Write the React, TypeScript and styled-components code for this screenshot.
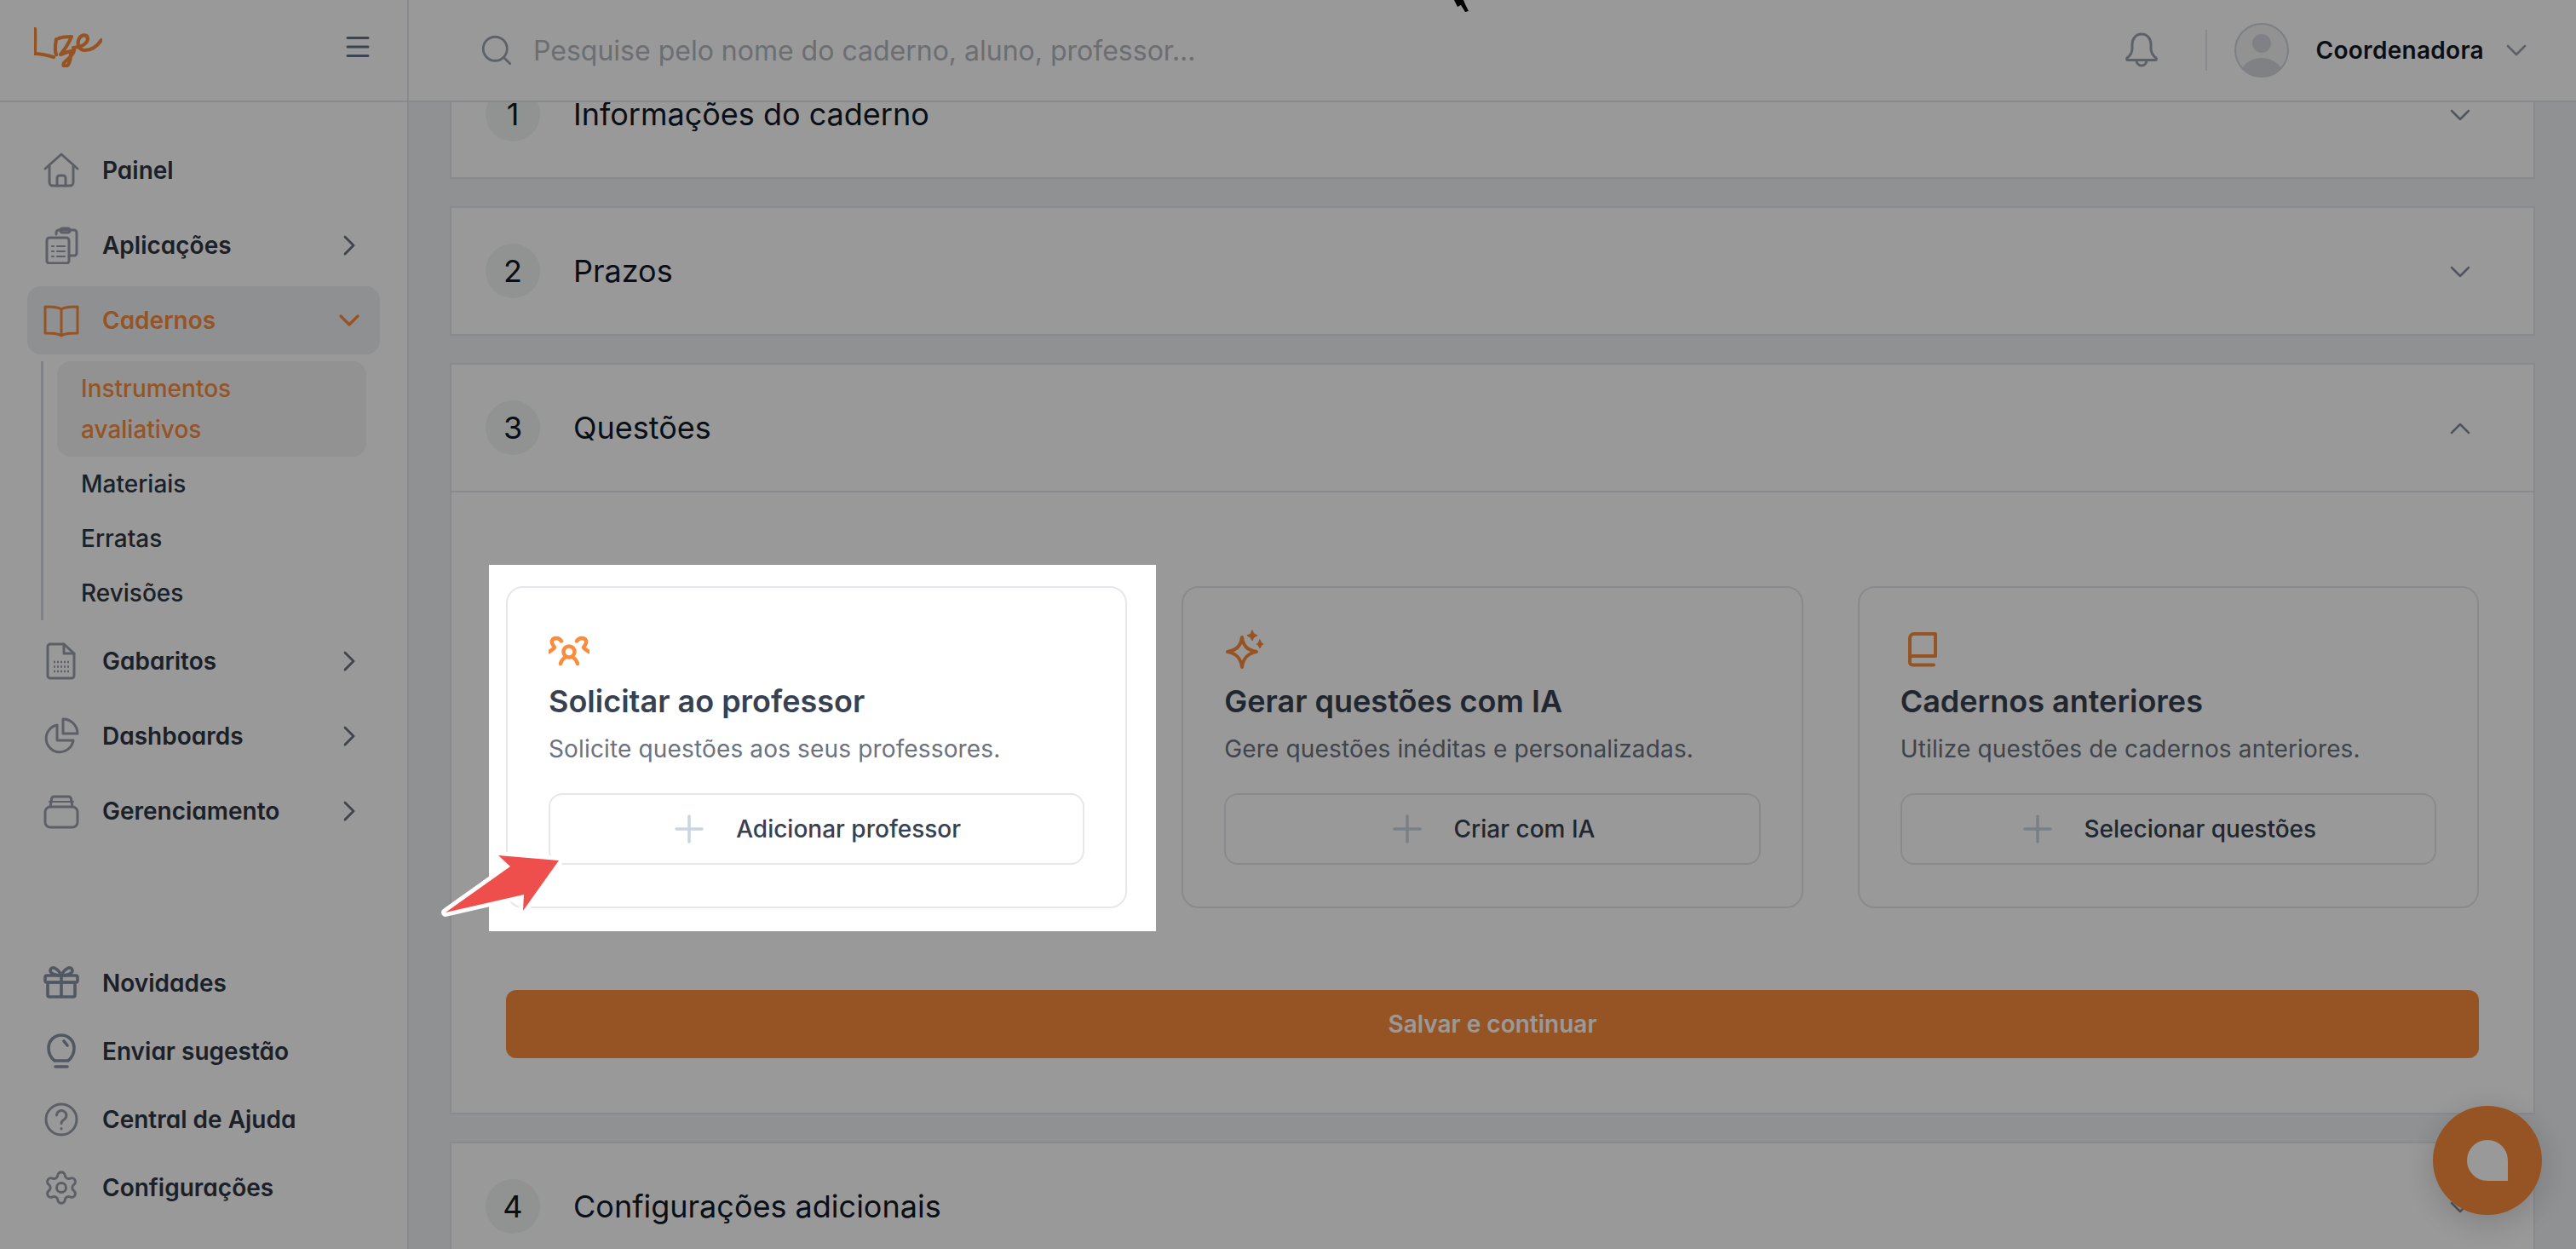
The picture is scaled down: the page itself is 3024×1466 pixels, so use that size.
import React from "react";
import styled, { createGlobalStyle } from "styled-components";
import { ChevronDown, ChevronRight, ChevronUp, Menu, Search, Settings } from "lucide-react";

const Global = createGlobalStyle`
  html, body { margin: 0; padding: 0; height: 100%; overflow: hidden; background: #f0f2f5; }
  * { box-sizing: border-box; }
  body { font-family: Inter, "Liberation Sans", sans-serif; color: #111827; }
`;

const ORANGE = "#fa8c3c";
const BORDER = "#e5e7eb";

const Shell = styled.div`
  display: flex;
  width: 100%;
  height: 100vh;
`;
const Sidebar = styled.aside`
  width: 480px;
  flex: none;
  display: flex;
  flex-direction: column;
  background: #fff;
  border-right: 2px solid ${BORDER};
`;
const Brand = styled.div`
  height: 120px;
  flex: none;
  display: flex;
  align-items: center;
  justify-content: space-between;
  padding: 0 40px 8px 40px;
  border-bottom: 2px solid ${BORDER};
  color: #64748b;
`;
const NavArea = styled.nav`
  flex: 1;
  display: flex;
  flex-direction: column;
  justify-content: space-between;
  padding: 40px 32px 32px;
`;
const NavGroup = styled.div`
  display: flex;
  flex-direction: column;
  gap: 8px;
`;
const FooterGroup = styled.div`
  display: flex;
  flex-direction: column;
`;
const NavRow = styled.div<{ $active?: boolean }>`
  height: 80px;
  display: flex;
  align-items: center;
  gap: 26px;
  padding: 0 16px 0 18px;
  border-radius: 16px;
  background: ${(p) => (p.$active ? "#eff1f4" : "transparent")};
  color: ${(p) => (p.$active ? ORANGE : "#2f3644")};
`;
const NavIcon = styled.svg<{ $dark?: boolean; $active?: boolean }>`
  width: 44px;
  height: 44px;
  flex: none;
  fill: none;
  stroke: ${(p) => (p.$active ? ORANGE : p.$dark ? "#8893a7" : "#9aa0ab")};
  stroke-width: ${(p) => (p.$dark ? 3.6 : 3)};
  stroke-linecap: round;
  stroke-linejoin: round;
`;
const GearIcon = styled(Settings)`
  width: 44px;
  height: 44px;
  flex: none;
  color: #9aa0ab;
`;
const NavLabel = styled.span`
  flex: 1;
  font-size: 28px;
  font-weight: 600;
  font-feature-settings: "cv11";
  white-space: nowrap;
`;
const NavChevron = styled.span<{ $active?: boolean }>`
  display: flex;
  color: ${(p) => (p.$active ? ORANGE : "#6b7280")};
`;
const SubList = styled.div`
  margin: 0 16px;
  padding-left: 16px;
  border-left: 3px solid #d5d8de;
`;
const SubItem = styled.div<{ $active?: boolean }>`
  padding: 8px 28px;
  font-size: 28px;
  line-height: 48px;
  font-weight: 500;
  border-radius: 16px;
  background: ${(p) => (p.$active ? "#f3f4f6" : "transparent")};
  color: ${(p) => (p.$active ? ORANGE : "#2f3644")};
`;
const Main = styled.main`
  flex: 1;
  min-width: 0;
  display: flex;
  flex-direction: column;
`;
const TopBar = styled.header`
  height: 120px;
  flex: none;
  display: flex;
  align-items: center;
  background: #fff;
  border-bottom: 2px solid ${BORDER};
  padding: 0 50px 0 82px;
`;
const SearchIcon = styled.span`
  display: flex;
  color: #9ca3af;
`;
const SearchText = styled.span`
  margin-left: 22px;
  flex: 1;
  font-size: 32px;
  color: #b4b7bf;
`;
const BellIcon = styled.svg`
  width: 44px;
  height: 44px;
  fill: none;
  stroke: #9ca3af;
  stroke-width: 3;
  stroke-linejoin: round;
  stroke-linecap: round;
`;
const Divider = styled.div`
  width: 2px;
  height: 48px;
  background: ${BORDER};
  margin: 0 32px 0 53px;
`;
const Avatar = styled.svg`
  width: 64px;
  height: 64px;
  flex: none;
`;
const UserName = styled.span`
  margin-left: 31px;
  font-size: 28px;
  font-weight: 600;
  letter-spacing: 0.3px;
  color: #111827;
`;
const UserChevron = styled.span`
  display: flex;
  margin-left: 18px;
  color: #9ca3af;
`;
const Scroller = styled.div`
  flex: 1;
  min-height: 0;
  overflow: hidden;
  padding: 0 48px;
`;
const Stack = styled.div`
  display: flex;
  flex-direction: column;
  gap: 32px;
  margin-top: -62px;
`;
const Panel = styled.section`
  background: #fff;
  border: 2px solid ${BORDER};
`;
const PanelHead = styled.div`
  height: 148px;
  display: flex;
  align-items: center;
  gap: 39px;
  padding: 0 66px 0 40px;
`;
const Step = styled.span`
  width: 64px;
  height: 64px;
  flex: none;
  display: flex;
  align-items: center;
  justify-content: center;
  border-radius: 50%;
  background: #f1f5f3;
  font-size: 36px;
  line-height: 28px;
  color: #111827;
`;
const PanelTitle = styled.h3`
  flex: 1;
  margin: 0;
  font-size: 36px;
  line-height: 28px;
  font-weight: 400;
  color: #111827;
`;
const PanelChevron = styled.span`
  display: flex;
  margin-top: 2px;
  color: #868d99;
`;
const PanelBody = styled.div`
  border-top: 2px solid ${BORDER};
  padding: 110px 64px 64px;
`;
const CardGrid = styled.div`
  display: grid;
  grid-template-columns: repeat(3, 1fr);
  gap: 64px;
`;
const Spot = styled.div`
  position: relative;
  z-index: 20;
  &::before {
    content: "";
    position: absolute;
    top: -25px;
    right: -34px;
    bottom: -27px;
    left: -20px;
    background: #fff;
  }
`;
const Card = styled.div`
  position: relative;
  display: flex;
  flex-direction: column;
  height: 378px;
  padding: 48px;
  background: #fff;
  border: 2px solid ${BORDER};
  border-radius: 20px;
`;
const CardIcon = styled.svg<{ $weight?: number }>`
  width: 48px;
  height: 48px;
  flex: none;
  fill: none;
  stroke: ${ORANGE};
  stroke-width: ${(p) => p.$weight ?? 4};
  stroke-linecap: round;
  stroke-linejoin: round;
`;
const CardTitle = styled.h4`
  margin: 9px 0 0;
  font-size: 36px;
  line-height: 56px;
  font-weight: 600;
  color: #374151;
  white-space: nowrap;
`;
const CardText = styled.p`
  margin: 8px 0 0;
  font-size: 28px;
  line-height: 40px;
  letter-spacing: 0.15px;
  color: #6b7280;
  white-space: nowrap;
`;
const AddButton = styled.button`
  margin-top: 32px;
  height: 84px;
  flex: none;
  display: flex;
  align-items: center;
  justify-content: center;
  gap: 35px;
  background: #fff;
  border: 2px solid ${BORDER};
  border-radius: 16px;
  font-family: inherit;
  font-size: 28px;
  font-weight: 500;
  color: #374151;
`;
const PlusIcon = styled.svg`
  width: 40px;
  height: 40px;
  flex: none;
  fill: none;
  stroke: #cbd5e1;
  stroke-width: 3.5;
  stroke-linecap: round;
`;
const SaveButton = styled.button`
  display: block;
  width: 100%;
  margin-top: 96px;
  height: 80px;
  border: none;
  border-radius: 12px;
  background: ${ORANGE};
  color: #fff;
  font-family: inherit;
  font-size: 28px;
  font-weight: 600;
`;
const Scrim = styled.div`
  position: fixed;
  inset: 0;
  z-index: 10;
  background: rgba(0, 0, 0, 0.4);
`;
const ChatBubble = styled.div`
  position: fixed;
  left: 2856px;
  top: 1298px;
  z-index: 5;
  width: 128px;
  height: 128px;
  display: flex;
  align-items: center;
  justify-content: center;
  border-radius: 50%;
  background: ${ORANGE};
  box-shadow: 0 8px 40px rgba(0, 0, 0, 0.18);
`;
const ChatGlyph = styled.div`
  width: 48px;
  height: 48px;
  background: #fff;
  border-radius: 50% 50% 0 50%;
`;
const Arrow = styled.svg`
  position: absolute;
  left: -79px;
  top: 312px;
  width: 150px;
  height: 80px;
  overflow: visible;
`;
const Pointer = styled.svg`
  position: fixed;
  left: 1706px;
  top: 0;
  z-index: 30;
  width: 20px;
  height: 14px;
`;

const rows = [
  { label: "Gabaritos", d: <><path d="M9 2H25L37 13V39a3 3 0 0 1-3 3H9a3 3 0 0 1-3-3V5a3 3 0 0 1 3-3Z" /><path d="M25 2V13H37" /><path d="M13 23H31M13 28.5H31M13 34H31" strokeWidth="2.5" strokeDasharray="2 2" strokeLinecap="butt" /></> },
  { label: "Dashboards", d: <><path d="M17 9A16 16 0 1 0 36 27H18a1 1 0 0 1-1-1Z" /><path d="M24 2V19H41A17 17 0 0 0 24 2Z" /></> },
  { label: "Gerenciamento", d: <><rect x="3" y="17" width="38" height="24" rx="6" /><path d="M9 17 10.5 8a3 3 0 0 1 3-3h17a3 3 0 0 1 3 3L35 17" /><path d="M8 11H36" strokeWidth="2.2" /></> },
];

const footer = [
  { label: "Novidades", dark: true, d: <><rect x="3" y="13" width="38" height="8" rx="2" /><rect x="6" y="21" width="32" height="17" rx="2" /><path d="M22 13V38" /><path d="M22 13C18 4 10 1 9 7C9 11 15 13 22 13C29 13 35 11 35 7C34 1 26 4 22 13Z" /></> },
  { label: "Enviar sugestão", dark: true, d: <><path d="M14 33C9 29 7 24 7 18A15 15 0 0 1 37 18C37 24 35 29 30 33Z" /><path d="M15 40H29" /><path d="M25 10 29 15" /></> },
  { label: "Central de Ajuda", d: <><circle cx="22" cy="22" r="18" /><path d="M16.5 17a5.7 5.7 0 1 1 8.8 5c-2 1.200-3.300 2.200-3.300 4.500" /><path d="M22 32.500V33" /></> },
];

const cards = [
  { title: "Gerar questões com IA", text: "Gere questões inéditas e personalizadas.", action: "Criar com IA", icon: <><path d="M21 10C22.500 20 27 25 38 27C27 29 22.500 35 21 45C19.500 35 15 29 4 27C15 25 19.500 20 21 10Z" /><path d="M33 2 35 6 39 8 35 10 33 14 31 10 27 8 31 6Z" fill={ORANGE} strokeWidth="1" /><path d="M42 13 44 17 46 18 44 19 42 23 40 19 38 18 40 17Z" fill={ORANGE} strokeWidth="1" /></> },
  { title: "Cadernos anteriores", text: "Utilize questões de cadernos anteriores.", action: "Selecionar questões", icon: <path d="M39 42.500H14a3 3 0 0 1-3-3V11a5 5 0 0 1 5-5H41V32H14a3 3 0 0 0-3 3.500" /> },
];

const AddContent = ({ children }: { children: React.ReactNode }) => (
  <AddButton>
    <PlusIcon viewBox="0 0 40 40"><path d="M20 5V35M5 20H35" /></PlusIcon>
    {children}
  </AddButton>
);

export default function App() {
  return (
    <Shell>
      <Global />
      <Sidebar>
        <Brand>
          <svg width="80" height="47" viewBox="0 0 80 47" fill="none" stroke={ORANGE} strokeWidth="4.200" strokeLinecap="round" strokeLinejoin="round">
            <path d="M1 2C1.500 10 1 22 1 31C8 31 16 33 23 35" />
            <path d="M26 14C25 20 24 28 26 32" />
            <path d="M29 13C34 11 39 11 44 11C41 18 36 26 31 32C36 30 42 28 47 27C46 34 38 38 35 42C33 46 37 47 40 44C42 41 43 36 43 31" />
            <path d="M46 24C54 24 62 20 63 14C63 8 56 8 53 13C50 19 52 27 60 27C68 27 75 21 79 15" />
          </svg>
          <Menu size={36} strokeWidth={2} />
        </Brand>
        <NavArea>
          <NavGroup>
            <NavRow>
              <NavIcon viewBox="0 0 44 44">
                <path d="M3 20 22 3 41 20" />
                <path d="M8 16V36a4 4 0 0 0 4 4H32a4 4 0 0 0 4-4V16" />
                <path d="M17 40V31a3 3 0 0 1 3-3h4a3 3 0 0 1 3 3V40" />
              </NavIcon>
              <NavLabel>Painel</NavLabel>
            </NavRow>
            <NavRow>
              <NavIcon viewBox="0 0 44 44">
                <path d="M16 9V7a3 3 0 0 1 3-3H37a3 3 0 0 1 3 3V31a3 3 0 0 1-3 3H32" />
                <rect x="21" y="2" width="11" height="5" rx="2.500" />
                <rect x="5" y="13" width="26" height="30" rx="3" />
                <path d="M11 23H13M17 23H26M11 29H13M17 29H26M11 35H13M17 35H26" strokeWidth="2.200" />
              </NavIcon>
              <NavLabel>Aplicações</NavLabel>
              <NavChevron><ChevronRight size={40} strokeWidth={1.7} /></NavChevron>
            </NavRow>
            <NavRow $active>
              <NavIcon $active viewBox="0 0 44 44">
                <path d="M22 9C18 6 12 6 3 6V37C12 37 18 37 22 40C26 37 32 37 41 37V6C32 6 26 6 22 9ZM22 9V40" />
              </NavIcon>
              <NavLabel>Cadernos</NavLabel>
              <NavChevron $active><ChevronDown size={40} strokeWidth={2} /></NavChevron>
            </NavRow>
            <SubList>
              <SubItem $active>Instrumentos avaliativos</SubItem>
              <SubItem>Materiais</SubItem>
              <SubItem>Erratas</SubItem>
              <SubItem>Revisões</SubItem>
            </SubList>
            {rows.map((r) => (
              <NavRow key={r.label}>
                <NavIcon viewBox="0 0 44 44">{r.d}</NavIcon>
                <NavLabel>{r.label}</NavLabel>
                <NavChevron><ChevronRight size={40} strokeWidth={1.7} /></NavChevron>
              </NavRow>
            ))}
          </NavGroup>
          <FooterGroup>
            {footer.map((r) => (
              <NavRow key={r.label}>
                <NavIcon $dark={r.dark} viewBox="0 0 44 44">{r.d}</NavIcon>
                <NavLabel>{r.label}</NavLabel>
              </NavRow>
            ))}
            <NavRow>
              <GearIcon strokeWidth={1.6} />
              <NavLabel>Configurações</NavLabel>
            </NavRow>
          </FooterGroup>
        </NavArea>
      </Sidebar>
      <Main>
        <TopBar>
          <SearchIcon><Search size={42} strokeWidth={1.6} /></SearchIcon>
          <SearchText>Pesquise pelo nome do caderno, aluno, professor...</SearchText>
          <BellIcon viewBox="0 0 44 44">
            <path d="M22 3C15 3 11 9 11 15V20C11 25 9 28 5 31C4 32 4.500 33.500 6 33.500H38C39.500 33.500 40 32 39 31C35 28 33 25 33 20V15C33 9 29 3 22 3Z" />
            <path d="M16 34A6 6 0 0 0 28 34" />
          </BellIcon>
          <Divider />
          <Avatar viewBox="0 0 64 64">
            <defs>
              <clipPath id="avatarClip"><circle cx="32" cy="32" r="31" /></clipPath>
            </defs>
            <circle cx="32" cy="32" r="31" fill="#f3f4f6" stroke="#d1d5db" strokeWidth="2" />
            <g clipPath="url(#avatarClip)" fill="#d4d7dd">
              <ellipse cx="32" cy="24" rx="11" ry="11" />
              <ellipse cx="32" cy="64" rx="26" ry="23" />
            </g>
          </Avatar>
          <UserName>Coordenadora</UserName>
          <UserChevron><ChevronDown size={40} strokeWidth={1.6} /></UserChevron>
        </TopBar>
        <Scroller>
          <Stack>
            <Panel>
              <PanelHead>
                <Step>1</Step>
                <PanelTitle>Informações do caderno</PanelTitle>
                <PanelChevron><ChevronDown size={40} strokeWidth={1.5} /></PanelChevron>
              </PanelHead>
            </Panel>
            <Panel>
              <PanelHead>
                <Step>2</Step>
                <PanelTitle>Prazos</PanelTitle>
                <PanelChevron><ChevronDown size={40} strokeWidth={1.5} /></PanelChevron>
              </PanelHead>
            </Panel>
            <Panel>
              <PanelHead>
                <Step>3</Step>
                <PanelTitle>Questões</PanelTitle>
                <PanelChevron><ChevronUp size={40} strokeWidth={1.5} /></PanelChevron>
              </PanelHead>
              <PanelBody>
                <CardGrid>
                  <Spot>
                    <Card>
                      <CardIcon $weight={4.5} viewBox="0 0 48 48">
                        <path d="M15 14.500C12 10 6 10 4 14C3 17 5 19 7 22C6 24 3 25 1 27" />
                        <path d="M33 14.500C36 10 42 10 44 14C45 17 43 19 41 22C42 24 45 25 47 27" />
                        <circle cx="24" cy="27" r="6.500" />
                        <path d="M14 41C15 37 17 35 20 33M34 41C33 37 31 35 28 33" />
                      </CardIcon>
                      <CardTitle>Solicitar ao professor</CardTitle>
                      <CardText>Solicite questões aos seus professores.</CardText>
                      <AddContent>Adicionar professor</AddContent>
                    </Card>
                    <Arrow viewBox="0 0 150 80">
                      <path d="M70 4 141 10 99 69 100 50 8 71 84 17Z" fill="#ef4f4c" stroke="#fff" strokeWidth="10" strokeLinejoin="round" paintOrder="stroke" />
                    </Arrow>
                  </Spot>
                  {cards.map((c) => (
                    <Card key={c.title}>
                      <CardIcon viewBox="0 0 48 48">{c.icon}</CardIcon>
                      <CardTitle>{c.title}</CardTitle>
                      <CardText>{c.text}</CardText>
                      <AddContent>{c.action}</AddContent>
                    </Card>
                  ))}
                </CardGrid>
                <SaveButton>Salvar e continuar</SaveButton>
              </PanelBody>
            </Panel>
            <Panel>
              <PanelHead>
                <Step>4</Step>
                <PanelTitle>Configurações adicionais</PanelTitle>
                <PanelChevron><ChevronDown size={40} strokeWidth={1.5} /></PanelChevron>
              </PanelHead>
            </Panel>
          </Stack>
        </Scroller>
      </Main>
      <ChatBubble><ChatGlyph /></ChatBubble>
      <Scrim />
      <Pointer viewBox="0 0 20 14"><path d="M1 0H12L14 5 18 13 14 14 9 6 5 8Z" fill="#000" /></Pointer>
    </Shell>
  );
}
